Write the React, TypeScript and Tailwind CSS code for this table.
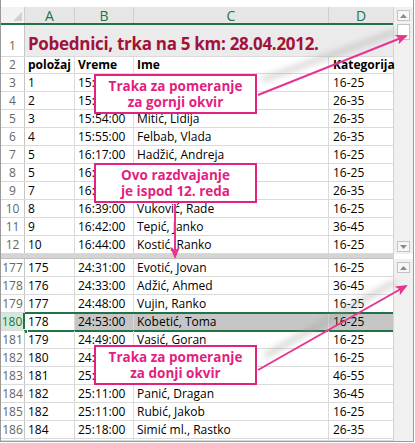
import React from "react";

const topRows: [number, string, string, string, string][] = [
  [3, "1", "15:", "", "16-25"],
  [4, "2", "15:", "", "26-35"],
  [5, "3", "15:54:00", "Mitić, Lidija", "26-35"],
  [6, "4", "15:55:00", "Felbab, Vlada", "26-35"],
  [7, "5", "16:17:00", "Hadžić, Andreja", "16-25"],
  [8, "5", "16:", "", "16-25"],
  [9, "7", "16:", "", "26-35"],
  [10, "8", "16:39:00", "Vuković, Rade", "16-25"],
  [11, "9", "16:42:00", "Tepić, Janko", "36-45"],
  [12, "10", "16:44:00", "Kostić, Ranko", "16-25"],
];

const bottomRows: [number, string, string, string, string][] = [
  [177, "175", "24:31:00", "Evotić, Jovan", "16-25"],
  [178, "176", "24:33:00", "Adžić, Ahmed", "36-45"],
  [179, "177", "24:48:00", "Vujin, Ranko", "16-25"],
  [180, "178", "24:53:00", "Kobetić, Toma", "16-25"],
  [181, "179", "24:49:00", "Vasić, Goran", "16-25"],
  [182, "180", "24:", "", "16-25"],
  [183, "181", "25:", "", "46-55"],
  [184, "182", "25:11:00", "Panić, Dragan", "36-45"],
  [185, "182", "25:11:00", "Rubić, Jakob", "16-25"],
  [186, "184", "25:18:00", "Simić ml., Rastko", "26-35"],
];

function RowNum({ n, active, cls = "" }: { n: React.ReactNode; active?: boolean; cls?: string }) {
  return (
    <div
      className={
        active
          ? "w-[24px] shrink-0 h-full flex items-center justify-center border-r-2 border-[#217346] bg-[#d3eadb] text-[#217346] text-[12px]"
          : `w-[24px] shrink-0 h-full flex items-center justify-center border-r border-[#c6c6c6] text-[#666666] text-[12px] ${cls}`
      }
    >
      {n}
    </div>
  );
}

function DataRow({
  r,
  bold,
  active,
  h = "h-[18px]",
}: {
  r: [number | string, string, string, string, string];
  bold?: boolean;
  active?: boolean;
  h?: string;
}) {
  const sel = "bg-[#c6c6c6]";
  const b = bold ? "font-bold" : "";
  return (
    <div className={`relative flex ${h} border-b border-[#dadada]`}>
      <RowNum n={r[0]} active={active} />
      <div className={`w-[50px] shrink-0 border-r border-[#dadada] pl-[3px] flex items-center ${b}`}>{r[1]}</div>
      <div className={`w-[59px] shrink-0 border-r border-[#dadada] pl-[3px] flex items-center ${b} ${active ? sel : ""}`}>{r[2]}</div>
      <div className={`w-[195px] shrink-0 border-r border-[#dadada] pl-[3px] flex items-center ${b} ${active ? sel : ""}`}>{r[3]}</div>
      <div className={`w-[64px] shrink-0 pl-[4px] flex items-center ${b} ${active ? sel : ""}`}>{r[4]}</div>
      {active && (
        <div className="absolute left-[24px] right-0 -top-[1px] h-[20px] border-t-2 border-b-2 border-[#217346]">
          <div className="absolute -left-[2px] -bottom-[4px] w-[5px] h-[5px] bg-[#217346] border border-white" />
        </div>
      )}
    </div>
  );
}

function ArrowBtn({ up }: { up?: boolean }) {
  return (
    <div className="w-[13px] h-[11px] mx-auto border border-[#c3c3c3] bg-[#f7f7f7] flex items-center justify-center">
      <svg width="7" height="4" viewBox="0 0 7 4">
        {up ? <path d="M0 4 L3.5 0 L7 4 Z" fill="#8a8a8a" /> : <path d="M0 0 L3.5 4 L7 0 Z" fill="#8a8a8a" />}
      </svg>
    </div>
  );
}

function Callout({ cls, l1, l2 }: { cls: string; l1: string; l2: string }) {
  return (
    <div
      className={`absolute ${cls} w-[163px] h-[40px] border-2 border-[#e3227f] bg-white flex flex-col items-center justify-center text-[13.5px] leading-[16px] font-bold text-[#e41e80]`}
    >
      <div>{l1}</div>
      <div>{l2}</div>
    </div>
  );
}

export default function App() {
  return (
    <div className="relative w-[415px] h-[443px] bg-white overflow-hidden font-['Open_Sans',sans-serif] text-[12px] text-black">
      <div className="flex w-[414px] h-[442px] border-l border-r border-b border-[#9a9a9a] pt-[7px]">
        {/* grid */}
        <div className="w-[392px] flex flex-col">
          {/* column headers */}
          <div className="flex h-[18px] border-b-2 border-[#217346] bg-[#e6e6e6] text-[#217346] text-[14px]">
            <div className="relative w-[24px] shrink-0 bg-[#f2f2f2] border-r border-[#cfcfcf]">
              <svg className="absolute right-[2px] bottom-[2px]" width="9" height="9" viewBox="0 0 9 9">
                <path d="M9 0 L9 9 L0 9 Z" fill="#d0d0d0" />
              </svg>
            </div>
            <div className="w-[50px] shrink-0 border-r border-[#cfcfcf] flex items-center justify-center">A</div>
            <div className="w-[59px] shrink-0 border-r border-[#cfcfcf] flex items-center justify-center">B</div>
            <div className="w-[195px] shrink-0 border-r border-[#cfcfcf] flex items-center justify-center">C</div>
            <div className="w-[64px] shrink-0 flex items-center justify-center">D</div>
          </div>
          {/* row 1 */}
          <div className="flex h-[32px] border-b border-[#dadada]">
            <RowNum n="1" cls="pt-[10px]" />
            <div className="flex-1 bg-[#ebebeb] pl-[3px] pt-[6px] flex items-center text-[17px] font-bold text-[#a3123a] tracking-[-0.3px]">
              Pobednici, trka na 5 km: 28.04.2012.
            </div>
          </div>
          <DataRow r={[2, "položaj", "Vreme", "Ime", "Kategorija"]} bold h="h-[17px]" />
          {topRows.map((r) => (
            <DataRow key={r[0]} r={r} />
          ))}
          {/* split bar */}
          <div className="h-[5px] bg-[#d4d4d4] border-b border-[#c0c0c0]" />
          {bottomRows.map((r) => (
            <DataRow key={r[0]} r={r} active={r[0] === 180} />
          ))}
          <DataRow r={["", "", "", "", ""]} h="h-[2px]" />
        </div>
        {/* scrollbar */}
        <div className="w-[20px] flex flex-col border-l border-[#d4d4d4]">
          <div className="h-[247px] bg-[#f0f0f0] flex flex-col pt-[3px] pb-[2px]">
            <ArrowBtn up />
            <div className="w-[13px] h-[16px] mx-auto mt-[3px] border border-[#c3c3c3] bg-white" />
            <div className="flex-1" />
            <ArrowBtn />
          </div>
          <div className="h-[5px] bg-white" />
          <div className="flex-1 bg-[#f0f0f0] flex flex-col pt-[3px]">
            <ArrowBtn up />
          </div>
        </div>
      </div>

      <Callout cls="left-[94px] top-[74px]" l1="Traka za pomeranje" l2="za gornji okvir" />
      <Callout cls="left-[94px] top-[163px]" l1="Ovo razdvajanje" l2="je ispod 12. reda" />
      <Callout cls="left-[94px] top-[345px]" l1="Traka za pomeranje" l2="za donji okvir" />

      <svg className="absolute inset-0 pointer-events-none" width="415" height="443" viewBox="0 0 415 443">
        <defs>
          <filter id="bl" x="-20%" y="-50%" width="140%" height="200%">
            <feGaussianBlur stdDeviation="3" />
          </filter>
          <marker id="ah" markerWidth="12" markerHeight="10" refX="10" refY="5" orient="auto" markerUnits="userSpaceOnUse">
            <path d="M0 0 L12 5 L0 10 L3 5 Z" fill="#e8348e" />
          </marker>
        </defs>
        <line x1="262" y1="80" x2="395" y2="32" stroke="#9a9a9a" strokeWidth="5" opacity="0.45" filter="url(#bl)" />
        <line x1="265" y1="356" x2="395" y2="282" stroke="#9a9a9a" strokeWidth="5" opacity="0.45" filter="url(#bl)" />
        <line x1="177" y1="204" x2="177" y2="216" stroke="#9a9a9a" strokeWidth="3" opacity="0.6" filter="url(#bl)" />
        <line x1="258" y1="95" x2="406" y2="36" stroke="#e8348e" strokeWidth="2" markerEnd="url(#ah)" />
        <line x1="175" y1="204" x2="175" y2="257" stroke="#e8348e" strokeWidth="2" markerEnd="url(#ah)" />
        <line x1="258" y1="370" x2="406" y2="286" stroke="#e8348e" strokeWidth="2" markerEnd="url(#ah)" />
      </svg>
    </div>
  );
}
